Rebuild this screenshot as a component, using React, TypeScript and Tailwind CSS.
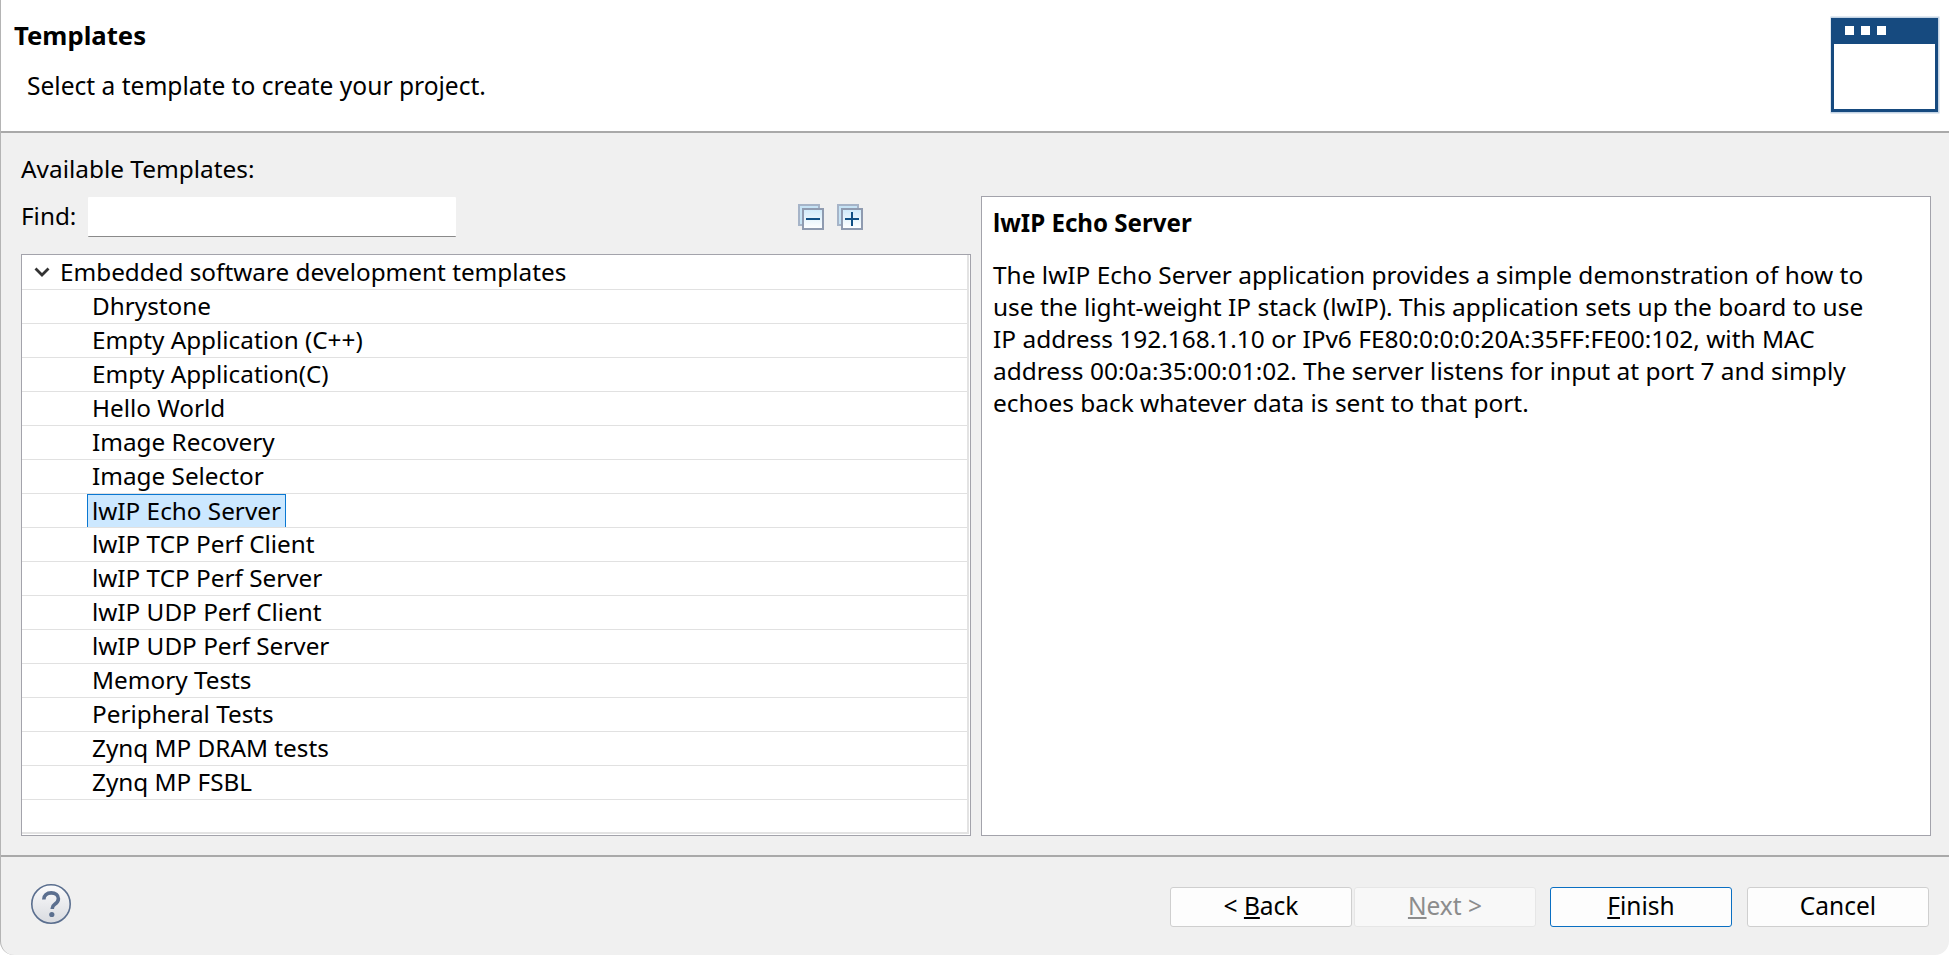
const TEMPLATES = [
  "Dhrystone",
  "Empty Application (C++)",
  "Empty Application(C)",
  "Hello World",
  "Image Recovery",
  "Image Selector",
  "lwIP Echo Server",
  "lwIP TCP Perf Client",
  "lwIP TCP Perf Server",
  "lwIP UDP Perf Client",
  "lwIP UDP Perf Server",
  "Memory Tests",
  "Peripheral Tests",
  "Zynq MP DRAM tests",
  "Zynq MP FSBL",
];

const DESCRIPTION = [
  "The lwIP Echo Server application provides a simple demonstration of how to",
  "use the light-weight IP stack (lwIP). This application sets up the board to use",
  "IP address 192.168.1.10 or IPv6 FE80:0:0:0:20A:35FF:FE00:102, with MAC",
  "address 00:0a:35:00:01:02. The server listens for input at port 7 and simply",
  "echoes back whatever data is sent to that port.",
];

const WindowIcon = () => (
  <svg width="110" height="98" viewBox="0 0 110 98" className="block">
    <rect x="0.5" y="0.5" width="109" height="97" fill="#c3d3e4" />
    <rect x="1" y="2" width="107" height="94" fill="#164a7f" />
    <rect x="4" y="28" width="101" height="65" fill="#ffffff" />
    <rect x="15" y="10" width="9" height="9" fill="#ffffff" />
    <rect x="31" y="10" width="9" height="9" fill="#ffffff" />
    <rect x="47" y="10" width="9" height="9" fill="#ffffff" />
  </svg>
);

const TreeToggleIcon = ({ plus }: { plus?: boolean }) => (
  <svg width="26" height="26" viewBox="0 0 26 26" className="block">
    <defs>
      <linearGradient id={plus ? "tp" : "tm"} x1="0" y1="0" x2="0" y2="1">
        <stop offset="0" stopColor="#cfeafa" />
        <stop offset="1" stopColor="#ffffff" />
      </linearGradient>
    </defs>
    <rect x="1" y="1" width="20" height="20" fill="#c6e3f5" stroke="#a6b4c8" strokeWidth="2" />
    <rect x="5" y="5" width="20" height="20" fill={`url(#${plus ? "tp" : "tm"})`} stroke="#8f9bb0" strokeWidth="2" />
    <rect x="8" y="14" width="14" height="2" fill="#0f4f84" />
    {plus && <rect x="14" y="8" width="2" height="14" fill="#0f4f84" />}
  </svg>
);

const HelpIcon = () => (
  <svg width="42" height="42" viewBox="0 0 42 42" className="block mb-1">
    <defs>
      <linearGradient id="help" x1="0" y1="0" x2="0" y2="1">
        <stop offset="0" stopColor="#fbfbfc" />
        <stop offset="1" stopColor="#d9dbe0" />
      </linearGradient>
    </defs>
    <circle cx="21" cy="21" r="19.2" fill="url(#help)" stroke="#5b6f8f" strokeWidth="1.6" />
    <path
      d="M13.8 16.5c0-4.2 3.2-6.6 7.4-6.6 4.2 0 7.2 2.3 7.2 5.8 0 2.9-1.7 4.2-3.6 5.5-1.7 1.2-2.5 2-2.5 4v.8"
      fill="none"
      stroke="#5b6f8f"
      strokeWidth="3.6"
    />
    <circle cx="21.8" cy="31.5" r="2.6" fill="#5b6f8f" />
  </svg>
);

const ChevronDown = () => (
  <svg width="16" height="10" viewBox="0 0 16 10" className="block">
    <path d="M1.5 1.5 8 8l6.5-6.5" fill="none" stroke="#333333" strokeWidth="2.8" />
  </svg>
);

const WizardButton = ({
  hotkey,
  before,
  after,
  disabled,
  primary,
}: {
  hotkey?: string;
  before?: string;
  after?: string;
  disabled?: boolean;
  primary?: boolean;
}) => (
  <button
    disabled={disabled}
    className={`w-[182px] h-10 rounded-[3px] border text-[24.5px] leading-none flex items-center justify-center ${
      disabled
        ? "bg-[#f8f8f8] border-[#e6e6e6] text-[#8c8c8c]"
        : primary
        ? "bg-[#fdfdfd] border-[#0a6fc2] text-black"
        : "bg-[#fdfdfd] border-[#cfcfcf] text-black"
    }`}
  >
    <span className="whitespace-pre pb-[2px]">
      {before}
      {hotkey && <span className="underline underline-offset-2">{hotkey}</span>}
      {after}
    </span>
  </button>
);

export default function App() {
  return (
    <div className="w-[1949px] h-[955px] overflow-hidden bg-white font-['Noto_Sans',sans-serif] text-black">
      <div className="h-full flex flex-col bg-[#f0f0f0] border-l border-[#b4b4b4] rounded-bl-[14px] rounded-br-[14px] overflow-hidden">
        {/* banner */}
        <div className="h-[133px] shrink-0 bg-white border-b-2 border-[#a9a9a9] flex justify-between pr-[9px]">
          <div>
            <div className="pl-[13px] pt-[18px] text-[25.7px] leading-[36px] font-bold">Templates</div>
            <div className="pl-[26px] pt-[15px] text-[24.55px] leading-[34px]">Select a template to create your project.</div>
          </div>
          <div className="pt-4">
            <WindowIcon />
          </div>
        </div>

        {/* body */}
        <div className="h-[724px] shrink-0 border-b-2 border-[#a9a9a9] pl-5 pt-[21px]">
          <div className="text-[24.4px] leading-[30px]">Available Templates:</div>
          <div className="flex gap-[10px] mt-[12px]">
            <div className="w-[950px] shrink-0 pt-px">
              <div className="h-10 flex items-center">
                <span className="text-[24.3px] w-[67px] pb-[2px]">Find:</span>
                <div className="w-[368px] h-10 bg-white border-b border-[#8a8a8a] rounded-[1px]" />
                <div className="flex gap-[13px] ml-[342px]">
                  <TreeToggleIcon />
                  <TreeToggleIcon plus />
                </div>
              </div>
              <div className="mt-[17px] h-[582px] bg-white border border-[#a3a3ab] flex flex-col">
                <div className="flex-1 min-h-0 flex flex-col mr-px mb-px border-r-2 border-b-2 border-[#e3e3e3]">
                  <div className="h-[35px] shrink-0 border-b border-[#e1e1e1] flex items-center text-[24.3px] leading-none">
                    <span className="ml-[12px] mr-[10px]">
                      <ChevronDown />
                    </span>
                    Embedded software development templates
                  </div>
                  {TEMPLATES.map((name) => {
                    const selected = name === "lwIP Echo Server";
                    return (
                      <div
                        key={name}
                        className="h-[34px] shrink-0 border-b border-[#e1e1e1] pl-[70px] flex items-center text-[24.3px] leading-none"
                      >
                        <span
                          className={
                            selected
                              ? "h-[33px] flex items-center bg-[#cce8ff] border border-[#0a78d2] border-b-0 px-[4px] -ml-[5px]"
                              : ""
                          }
                        >
                          {name}
                        </span>
                      </div>
                    );
                  })}
                </div>
              </div>
            </div>

            <div className="w-[950px] h-[640px] bg-white border border-[#a3a3ab] pl-[11px] pt-[9px]">
              <div className="text-[24.1px] leading-[34px] font-bold">lwIP Echo Server</div>
              <div className="mt-[19px] text-[24.45px] leading-[32px]">
                {DESCRIPTION.map((line) => (
                  <div key={line} className="whitespace-nowrap">
                    {line}
                  </div>
                ))}
              </div>
            </div>
          </div>
        </div>

        {/* footer */}
        <div className="flex-1 flex items-center justify-between pl-[29px] pr-5">
          <HelpIcon />
          <div className="flex items-center pt-[2px]">
            <WizardButton before="< " hotkey="B" after="ack" />
            <span className="w-[2px]" />
            <WizardButton hotkey="N" after="ext >" disabled />
            <span className="w-[14px]" />
            <WizardButton hotkey="F" after="inish" primary />
            <span className="w-[15px]" />
            <WizardButton before="Cancel" />
          </div>
        </div>
      </div>
    </div>
  );
}
